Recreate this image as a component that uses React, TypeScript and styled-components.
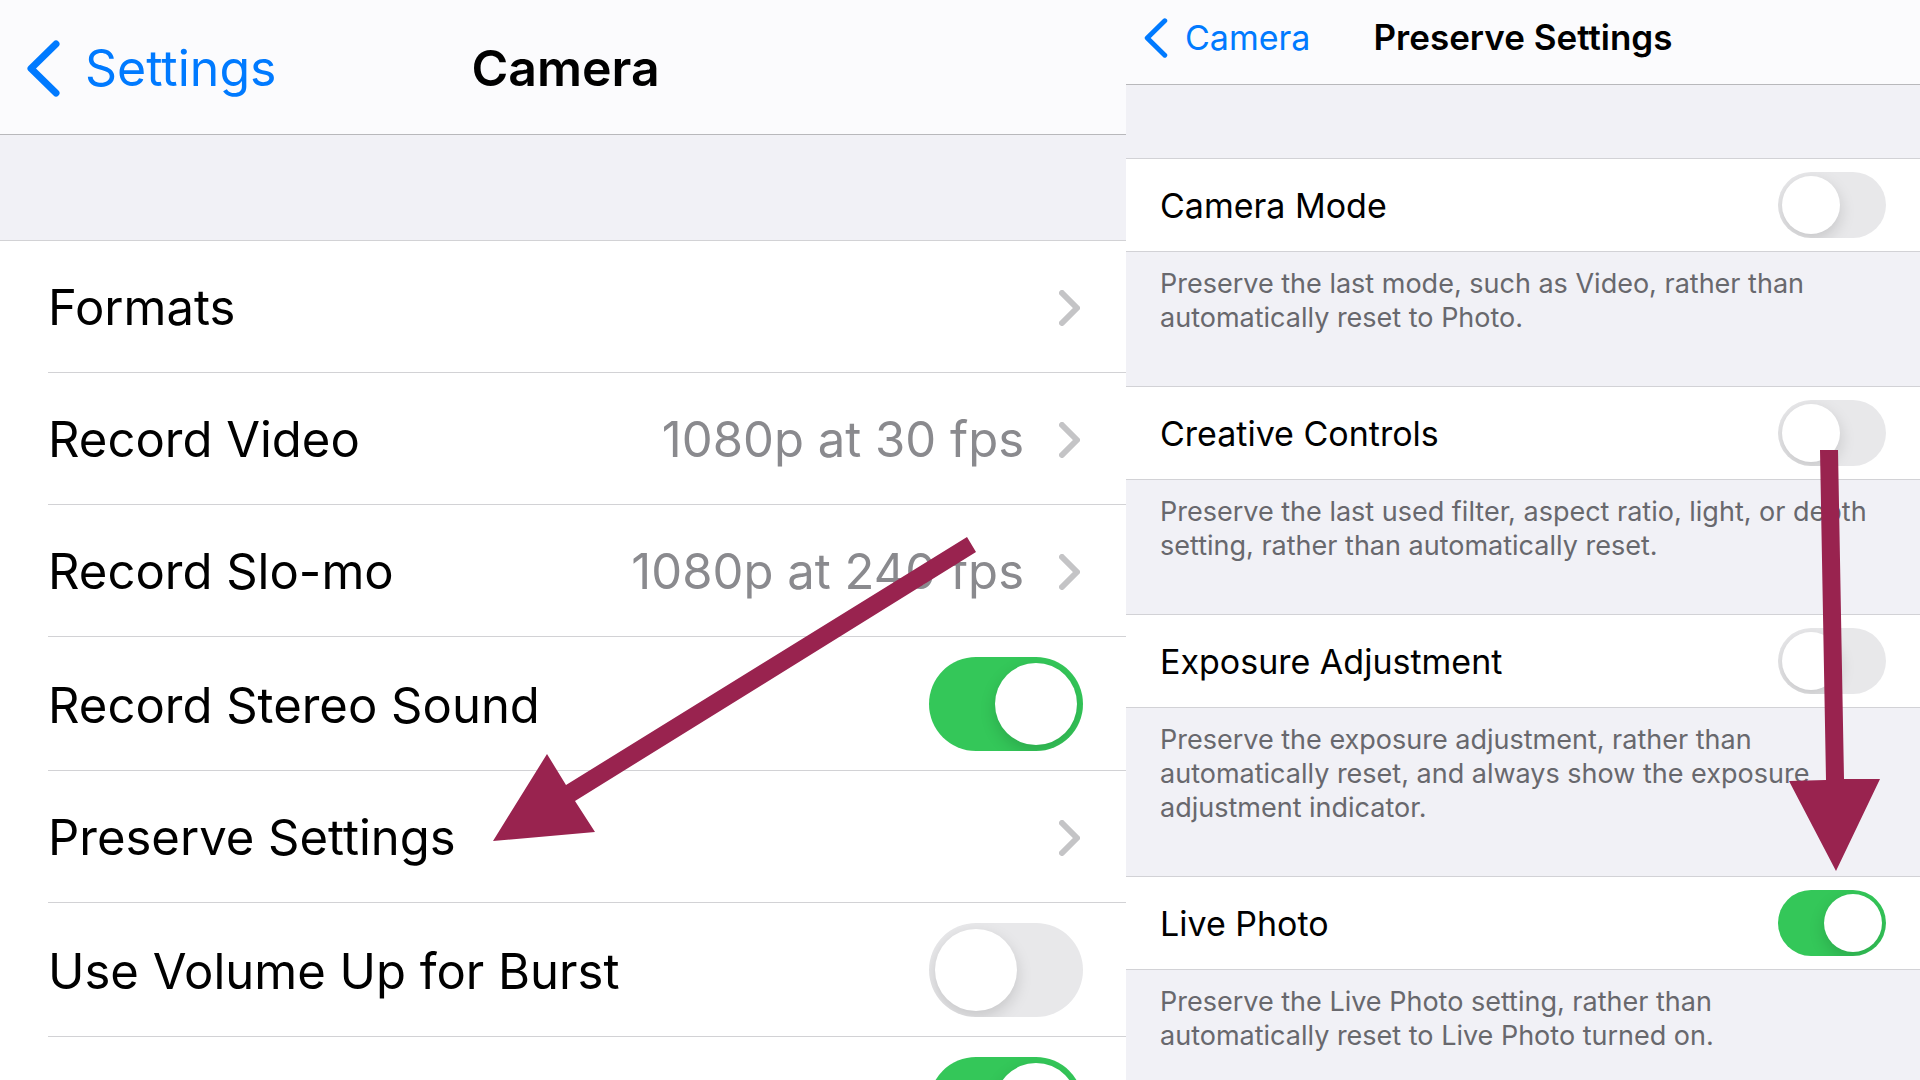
import React, { useId, useState } from "react";
import styled, { createGlobalStyle } from "styled-components";

const GlobalStyle = createGlobalStyle`
  *, *::before, *::after { box-sizing: border-box; }
  body {
    margin: 0;
    background: #f1f1f6;
    color: #000;
    font-family: Inter, "Liberation Sans", sans-serif;
  }
`;

type Scale = "large" | "small";
interface Scaled {
  $scale: Scale;
}
const pick = (large: string, small: string) => ({ $scale }: Scaled) =>
  $scale === "large" ? large : small;

const Page = styled.main`
  display: grid;
  grid-template-columns: minmax(0, 563fr) minmax(0, 397fr);
  height: 100vh;
  overflow: hidden;
`;

const Panel = styled.section`
  position: relative;
  background: #f1f1f6;
  overflow: hidden;
`;

const NavBar = styled.header<Scaled>`
  display: grid;
  grid-template-columns: 1fr auto 1fr;
  align-items: center;
  height: ${pick("135px", "85px")};
  padding: ${pick("2px 22px 0 27px", "0 18px 9px")};
  background: #fbfbfd;
  border-bottom: 1px solid #b8b8bb;
`;

const BackLink = styled.a<Scaled>`
  display: flex;
  align-items: center;
  gap: ${pick("25px", "17px")};
  color: #007aff;
  font-size: ${pick("50px", "34px")};
  line-height: 1;
  text-decoration: none;
`;

const Title = styled.h1<Scaled>`
  margin: 0;
  font-size: ${pick("50px", "35px")};
  font-weight: 600;
  line-height: 1;
  white-space: nowrap;
`;

const List = styled.ul`
  margin: 105px 0 0;
  padding: 0 0 0 48px;
  list-style: none;
  background: #fff;
  border-top: 1px solid #d2d2d5;
`;

const Item = styled.li`
  border-bottom: 1px solid #d2d2d5;
`;

const LinkRow = styled.a`
  display: flex;
  align-items: center;
  height: 131px;
  padding-top: 2px;
  padding-right: 46px;
  color: inherit;
  font-size: 49px;
  text-decoration: none;
`;

const RowLabel = styled.span`
  flex: 1;
  white-space: nowrap;
`;

const Value = styled.span`
  margin-right: 35px;
  color: #8a8a8e;
  white-space: nowrap;
`;

const ToggleRow = styled.div<Scaled>`
  display: flex;
  align-items: center;
  justify-content: space-between;
  padding: ${pick("20px 43px 19px 0", "13px 34px")};
  background: #fff;
  font-size: ${pick("49px", "34px")};
  line-height: 1;
`;

const ToggleLabel = styled.label`
  padding-top: 2px;
`;

const Switch = styled.input<Scaled>`
  appearance: none;
  flex: none;
  width: ${pick("154px", "108px")};
  height: ${pick("94px", "66px")};
  margin: 0;
  padding: ${pick("6px", "4px")};
  border-radius: 47px;
  background: #e8e8ea;
  overflow: hidden;
  cursor: pointer;

  &::before {
    content: "";
    display: block;
    width: ${pick("82px", "58px")};
    height: ${pick("82px", "58px")};
    border-radius: 50%;
    background: #fff;
    box-shadow: 0 6px 16px rgba(0, 0, 0, 0.15);
  }

  &:checked {
    background: #34c759;
  }

  &:checked::before {
    margin-left: auto;
  }
`;

const Groups = styled.div`
  margin-top: 73px;
`;

const Group = styled.div`
  border-top: 1px solid #d2d2d6;
`;

const Note = styled.p`
  margin: 0;
  padding: 15px 34px 51px;
  border-top: 1px solid #d2d2d6;
  color: #68686d;
  font-size: 27px;
  line-height: 34px;
  white-space: pre;
`;

const LeftArrow = styled.svg`
  position: absolute;
  left: 493px;
  top: 537px;
  width: 483px;
  height: 304px;
  pointer-events: none;
`;

const DownArrow = styled.svg`
  position: absolute;
  right: 40px;
  top: 450px;
  width: 91px;
  height: 421px;
  pointer-events: none;
`;

function BackChevron({ scale }: { scale: Scale }) {
  const large = scale === "large";
  return (
    <svg
      width={large ? 33 : 24}
      height={large ? 57 : 40}
      viewBox="0 0 33 57"
      fill="none"
      stroke="currentColor"
      strokeWidth="7"
      strokeLinecap="round"
      strokeLinejoin="round"
      aria-hidden="true"
    >
      <path d="M29 4 4 28.500 29 53" />
    </svg>
  );
}

function RowChevron() {
  return (
    <svg
      width="21"
      height="36"
      viewBox="0 0 21 36"
      fill="none"
      stroke="#c4c4c6"
      strokeWidth="6"
      strokeLinecap="round"
      strokeLinejoin="round"
      aria-hidden="true"
    >
      <path d="M3 3 18 18 3 33" />
    </svg>
  );
}

interface ToggleProps {
  label?: string;
  name?: string;
  on?: boolean;
  scale: Scale;
}

function Toggle({ label, name, on = false, scale }: ToggleProps) {
  const id = useId();
  const [checked, setChecked] = useState(on);
  return (
    <ToggleRow $scale={scale}>
      <ToggleLabel htmlFor={id}>{label}</ToggleLabel>
      <Switch
        id={id}
        type="checkbox"
        role="switch"
        aria-label={name}
        $scale={scale}
        checked={checked}
        onChange={(e) => setChecked(e.target.checked)}
      />
    </ToggleRow>
  );
}

function Disclosure({ label, value }: { label: string; value?: string }) {
  return (
    <LinkRow href="#">
      <RowLabel>{label}</RowLabel>
      {value && <Value>{value}</Value>}
      <RowChevron />
    </LinkRow>
  );
}

const preserved = [
  {
    label: "Camera Mode",
    note: "Preserve the last mode, such as Video, rather than\nautomatically reset to Photo.",
  },
  {
    label: "Creative Controls",
    note: "Preserve the last used filter, aspect ratio, light, or depth\nsetting, rather than automatically reset.",
  },
  {
    label: "Exposure Adjustment",
    note: "Preserve the exposure adjustment, rather than\nautomatically reset, and always show the exposure\nadjustment indicator.",
  },
  {
    label: "Live Photo",
    on: true,
    note: "Preserve the Live Photo setting, rather than\nautomatically reset to Live Photo turned on.",
  },
];

export default function App() {
  return (
    <>
      <GlobalStyle />
      <Page>
        <Panel>
          <NavBar $scale="large">
            <BackLink href="#" $scale="large">
              <BackChevron scale="large" />
              Settings
            </BackLink>
            <Title $scale="large">Camera</Title>
          </NavBar>
          <List>
            <Item><Disclosure label="Formats" /></Item>
            <Item><Disclosure label="Record Video" value="1080p at 30 fps" /></Item>
            <Item><Disclosure label="Record Slo-mo" value="1080p at 240 fps" /></Item>
            <Item><Toggle label="Record Stereo Sound" on scale="large" /></Item>
            <Item><Disclosure label="Preserve Settings" /></Item>
            <Item><Toggle label="Use Volume Up for Burst" scale="large" /></Item>
            <Item><Toggle name="Camera option" on scale="large" /></Item>
          </List>
          <LeftArrow viewBox="0 0 483 304" aria-hidden="true">
            <polygon
              fill="#99234f"
              points="474,0 483,15 82,264 102,295 0,304 54,217 73,248"
            />
          </LeftArrow>
        </Panel>
        <Panel>
          <NavBar $scale="small">
            <BackLink href="#" $scale="small">
              <BackChevron scale="small" />
              Camera
            </BackLink>
            <Title $scale="small">Preserve Settings</Title>
          </NavBar>
          <Groups>
            {preserved.map(({ label, note, on }) => (
              <Group key={label}>
                <Toggle label={label} on={on} scale="small" />
                <Note>{note}</Note>
              </Group>
            ))}
          </Groups>
          <DownArrow viewBox="0 0 91 421" aria-hidden="true">
            <polygon
              fill="#99234f"
              points="31,0 49,0 55,329 91,329 47,421 0,331 37,330"
            />
          </DownArrow>
        </Panel>
      </Page>
    </>
  );
}
